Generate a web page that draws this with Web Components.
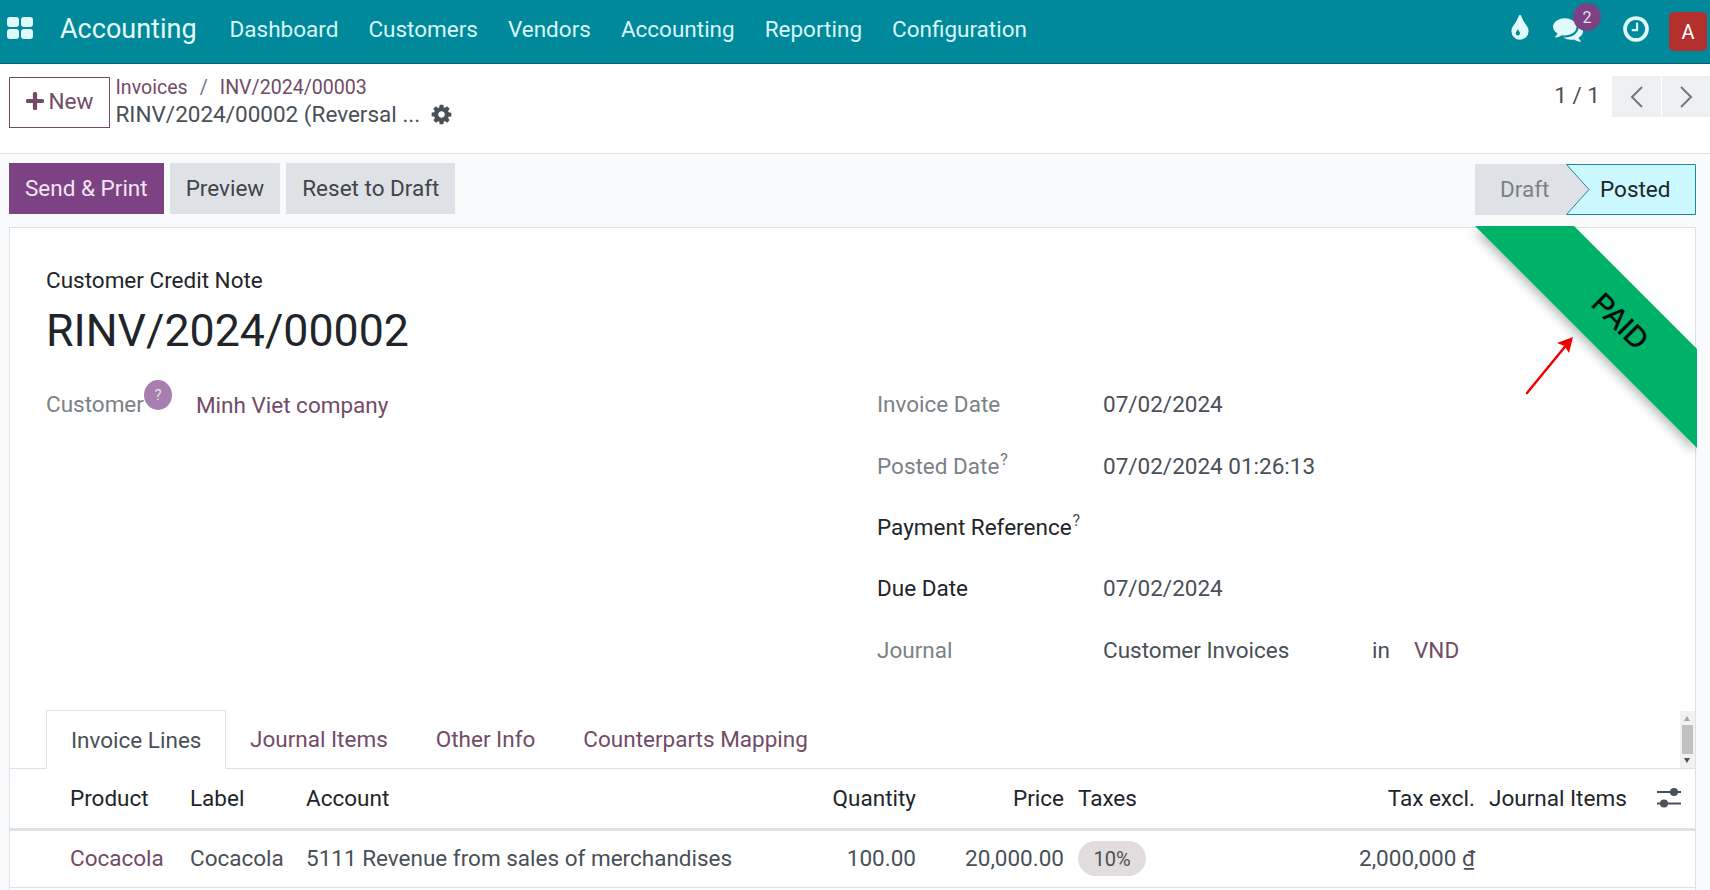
<!DOCTYPE html>
<html lang="en"><head><meta charset="utf-8"><title>Accounting</title>
<style>
html,body{margin:0;padding:0;height:890px;overflow:hidden;background:#f9fafb;}
body{font-family:Roboto,"Liberation Sans",sans-serif;font-size:22.5px;color:#495057;}
</style></head><body>
<o-navbar></o-navbar>
<o-control-panel></o-control-panel>
<o-status-row></o-status-row>
<o-sheet></o-sheet>
<script>
const COG="M1152 896q0-106-75-181t-181-75-181 75-75 181 75 181 181 75 181-75 75-181zm512-109v222q0 12-8 23t-20 13l-185 28q-19 54-39 91 35 50 107 138 10 12 10 25t-9 23q-27 37-99 108t-94 71q-12 0-26-9l-138-108q-44 23-91 38-16 136-29 186-7 28-36 28h-222q-14 0-24.500-8.500t-11.500-21.500l-28-184q-49-16-90-37l-141 107q-10 9-25 9-14 0-25-11-126-114-165-168-7-10-7-23 0-12 8-23 15-21 51-66.500t54-70.500q-27-50-41-99l-183-27q-13-2-21-12.500t-8-23.500v-222q0-12 8-23t19-13l186-28q14-46 39-92-40-57-107-138-10-12-10-24 0-10 9-23 26-36 98.500-107.500t94.500-71.500q13 0 26 10l138 107q44-23 91-38 16-136 29-186 7-28 36-28h222q14 0 24.500 8.500t11.500 21.500l28 184q49 16 90 37l142-107q9-9 24-9 13 0 25 10 129 119 165 170 7 8 7 22 0 12-8 23-15 21-51 66.500t-54 70.500q26 50 41 98l183 28q13 2 21 12.500t8 23.500z";
const TINT="M896 1152q0-36-20-69-1-1-15.500-22.500t-25.500-38-25-44-21-50.500q-4-16-21-16t-21 16q-7 23-21 50.500t-25 44-25.500 38-15.500 22.500q-20 33-20 69 0 53 37.500 90.500t90.500 37.500 90.500-37.500 37.500-90.500zm512-128q0 212-150 362t-362 150-362-150-150-362q0-145 81-275 6-9 62.500-90.500t101-151 99.500-178 83-201.500q9-30 34-47t51-17 51.500 17 33.500 47q28 93 83 201.500t99.500 178 101 151 62.500 90.500q81 127 81 275z";
const COMMENTS="M1408 768q0 139-94 257t-256.500 186.500-353.500 68.500q-86 0-176-16-124 88-278 128-36 9-86 16h-3q-11 0-20.500-8t-11.500-21q-1-3-1-6.500t.5-6.500 2-6l2.500-5 3.500-5.500 4-5 4.500-5 4-4.500q5-6 23-25t26-29.500 22.500-29 25-38.500 20.500-44q-124-72-195-177t-71-224q0-139 94-257t256.500-186.500 353.500-68.500 353.500 68.500 256.500 186.500 94 257zm384 256q0 120-71 224.500t-195 176.500q10 24 20.500 44t25 38.500 22.500 29 26 29.500 23 25q1 1 4 4.500t4.500 5 4 5 3.500 5.500l2.500 5 2 6 .5 6.500-1 6.500q-3 14-13 22t-22 7q-50-7-86-16-154-40-278-128-90 16-176 16-271 0-472-132 58 4 88 4 161 0 309-45t264-129q125-92 192-212t67-254q0-77-23-152 129 71 204 178t75 230z";
const CLOCK="M1024 544v448q0 14-9 23t-23 9h-320q-14 0-23-9t-9-23v-64q0-14 9-23t23-9h224v-352q0-14 9-23t23-9h64q14 0 23 9t9 23zm416 352q0-148-73-273t-198-198-273-73-273 73-198 198-73 273 73 273 198 198 273 73 273-73 198-198 73-273zm224 0q0 209-103 385.500t-279.500 279.500-385.500 103-385.500-103-279.500-279.500-103-385.500 103-385.500 279.500-279.500 385.500-103 385.500 103 279.500 279.500 103 385.500z";
function def(name,html){customElements.define(name,class extends HTMLElement{constructor(){super();this.attachShadow({mode:"open"}).innerHTML=html(this);}});}

def("o-navbar",()=>`<style>
:host{display:flex;align-items:center;background:#00899b;border-bottom:1px solid #04606c;color:#d9f6f8;box-sizing:border-box;height:64px;padding:0 0 6px 6px;}
.apps{display:block;width:26px;height:22px;margin:-2px 0 0 1px;}
.brand{font-size:27px;margin-left:27px;margin-right:33px;color:#e6f9fb;}
.menu{display:flex;gap:30px;}
.right{margin-left:auto;display:flex;align-items:center;position:relative;padding-top:1px;}
svg{display:block;fill:#e0f9fb;}
.drop{margin-right:18px;}
.chat{position:relative;margin-right:38px;}
.badge{position:absolute;left:20px;top:-11px;width:28px;height:28px;border-radius:50%;background:#7c4283;color:#e9dcec;font-size:16px;display:flex;align-items:center;justify-content:center;}
.av{width:38px;height:39px;border-radius:5px;background:#b3302e;color:#fff;font-size:20px;display:flex;align-items:center;justify-content:center;margin:5px 3px 0 18px;}
</style>
<svg class="apps" viewBox="0 0 26 22"><rect x="0" y="0" width="12" height="10" rx="3"/><rect x="14" y="0" width="12" height="10" rx="3"/><rect x="0" y="12" width="12" height="10" rx="3"/><rect x="14" y="12" width="12" height="10" rx="3"/></svg>
<span class="brand">Accounting</span>
<div class="menu"><span>Dashboard</span><span>Customers</span><span>Vendors</span><span>Accounting</span><span>Reporting</span><span>Configuration</span></div>
<div class="right">
<svg class="drop" width="30" height="30" viewBox="0 0 1792 1792"><path fill-rule="evenodd" d="${TINT}"/></svg>
<div class="chat"><svg width="30" height="30" viewBox="0 0 1792 1792"><path d="${COMMENTS}"/></svg><span class="badge">2</span></div>
<svg width="30" height="30" viewBox="0 0 1792 1792"><path d="${CLOCK}"/></svg>
<div class="av">A</div>
</div>`);

def("o-control-panel",()=>`<style>
:host{display:flex;background:#fff;border-bottom:1px solid #dee2e6;padding:13px 0 0 9px;box-sizing:border-box;height:90px;}
.new{box-sizing:border-box;width:101px;height:51px;padding-bottom:3px;border:1px solid #714b67;color:#714b67;display:flex;align-items:center;justify-content:center;gap:5px;}
.crumbs{margin-left:5.500px;line-height:27px;margin-top:-3px;}
.l{color:#714b67;font-size:19.6px;white-space:nowrap;}
.l i{font-style:normal;color:#6c757d;margin:0 12px;}
.cur{display:flex;align-items:center;white-space:nowrap;color:#495057;}
.cur svg{margin-left:10px;fill:#495057;}
.pager{margin-left:auto;margin-top:-1px;display:flex;align-items:flex-start;}
.num{margin:6px 11px 0 0;color:#495057;}
.btn{width:49px;height:41px;background:#eef0f2;display:flex;align-items:center;justify-content:center;margin-left:1px;}
.btn svg{fill:none;stroke:#777;stroke-width:2;}
</style>
<div class="new"><svg width="18" height="18" viewBox="0 0 17 17" fill="#714b67"><path d="M6.500 1.500q0-1.500 1.500-1.500h1q1.500 0 1.500 1.500v5h5q1.500 0 1.500 1.500v1q0 1.500-1.500 1.500h-5v5q0 1.500-1.500 1.500h-1q-1.500 0-1.500-1.500v-5h-5q-1.500 0-1.500-1.500v-1q0-1.500 1.500-1.500h5z"/></svg><span>New</span></div>
<div class="crumbs"><div class="l"><span>Invoices</span><i>/</i><span>INV/2024/00003</span></div>
<div class="cur"><span>RINV/2024/00002 (Reversal ...</span><svg width="23" height="23" viewBox="0 0 1792 1792"><path d="${COG}"/></svg></div></div>
<div class="pager"><span class="num">1 / 1</span>
<div class="btn"><svg width="16" height="24" viewBox="0 0 16 24"><path d="M13 2 3 12l10 10"/></svg></div>
<div class="btn" style="width:48px"><svg width="16" height="24" viewBox="0 0 16 24"><path d="M3 2l10 10L3 22"/></svg></div></div>`);

def("o-status-row",()=>`<style>
:host{display:flex;padding:9px 14px 0 9px;box-sizing:border-box;height:73px;gap:6px;}
.b{height:51px;display:flex;align-items:center;padding:0 16px 2px;background:#dee2e6;color:#3f454b;box-sizing:border-box;}
.p{background:#7c4283;color:#f2e6f3;}
.st{margin-left:auto;margin-top:1px;display:flex;height:51px;position:relative;}
.d{width:114px;background:#dee2e6;color:#7b8186;display:flex;align-items:center;padding:0 0 2px 25px;box-sizing:border-box;}
.o{width:130px;margin-left:-23px;position:relative;color:#212529;display:flex;align-items:center;padding:0 0 2px 34px;box-sizing:border-box;}
.o svg{position:absolute;inset:0;width:100%;height:100%;}
.o span{position:relative;}
</style>
<div class="b p">Send &amp; Print</div><div class="b">Preview</div><div class="b">Reset to Draft</div>
<div class="st"><div class="d">Draft</div><div class="o"><svg viewBox="0 0 130 51" preserveAspectRatio="none"><path d="M.5.500H129.500V50.500H.5L23 25.500Z" fill="#ccf9ff" stroke="#1e8a97"/></svg><span>Posted</span></div></div>`);

def("o-ribbon",()=>`<style>
:host{display:block;position:absolute;left:1455px;top:-2px;width:232px;height:232px;overflow:hidden;pointer-events:none;}
svg{position:absolute;left:0;top:0;}
.t{position:absolute;left:95px;top:79px;width:120px;text-align:center;transform:rotate(45deg);font:29px "Liberation Sans",sans-serif;color:#0a0a0a;-webkit-text-stroke:.5px #0a0a0a;}
</style>
<svg width="232" height="232" viewBox="0 0 232 232"><defs><filter id="s" x="-20%" y="-20%" width="140%" height="140%"><feDropShadow dx="-2" dy="5" stdDeviation="5" flood-color="#000" flood-opacity=".25"/></filter></defs><path d="M10 0H109L232 123V222Z" fill="#04b167" filter="url(#s)"/></svg><div class="t">PAID</div>`);

def("o-arrow",()=>`<style>:host{display:block;position:absolute;left:1515px;top:104px;width:50px;height:65px;}svg{display:block;}</style>
<svg width="50" height="65" viewBox="0 0 50 65"><path d="M2 61 43 11" stroke="#f00000" stroke-width="2.500" stroke-linecap="round" fill="none"/><path d="M48 5 44 21 39.500 14 32 11Z" fill="#f00000"/></svg>`);

def("o-field",(el)=>`<style>
:host{display:grid;grid-template-columns:226px auto 1fr;height:61.400px;align-items:center;color:#495057;white-space:nowrap;}
.k{color:${el.hasAttribute("strong")?"#212529":"#7b8186"};}
sup{font-size:16px;color:${el.hasAttribute("strong")?"#495057":"#6c757d"};margin-left:1px;vertical-align:9px;line-height:0;}
</style><div class="k">${el.getAttribute("label")}${el.hasAttribute("help")?"<sup>?</sup>":""}</div><div><slot></slot></div>`);

def("o-tabs",()=>`<style>
:host{display:flex;position:relative;height:59px;border-bottom:1px solid #dee2e6;box-sizing:border-box;padding-left:36px;margin-top:30px;}
.t{color:#714b67;height:58px;display:flex;align-items:center;white-space:nowrap;}
.a{box-sizing:border-box;width:180px;height:59px;border:1px solid #dee2e6;border-bottom:1px solid #fff;padding-left:24px;color:#495057;background:#fff;margin-right:24px;}
.sb{position:absolute;right:0;top:1px;width:15px;height:57px;background:#f1f1f1;}
.th{position:absolute;left:2px;right:2px;top:14px;height:29px;background:#c1c1c1;}
.u,.dn{position:absolute;left:4px;width:0;height:0;border-left:3.500px solid transparent;border-right:3.500px solid transparent;}
.u{top:5px;border-bottom:5px solid #a3a3a3;}.dn{bottom:5px;border-top:5px solid #505050;}
</style>
<div class="t a">Invoice Lines</div><div class="t" style="margin-right:48px">Journal Items</div><div class="t" style="margin-right:48px">Other Info</div><div class="t">Counterparts Mapping</div>
<div class="sb"><div class="u"></div><div class="th"></div><div class="dn"></div></div>`);

def("o-lines",()=>`<style>
:host{display:block;}
table{width:100%;border-collapse:separate;border-spacing:0;table-layout:fixed;}
th,td{font-weight:400;text-align:left;padding:0;white-space:nowrap;overflow:visible;}
th{height:58px;padding-bottom:1px;border-bottom:3px solid #dee2e6;color:#212529;}
td{height:53px;padding-bottom:3px;border-bottom:1px solid #dee2e6;color:#495057;}
.e{text-align:right;}
a{color:#714b67;}
.tag{display:inline-flex;align-items:center;justify-content:center;width:68px;height:35px;border-radius:18px;background:#e3dcdc;font-size:20px;color:#495057;margin-top:2px;vertical-align:middle;}
.u{text-decoration:underline;}
svg{display:block;}
</style>
<table><colgroup><col style="width:60px"><col style="width:120px"><col style="width:116px"><col style="width:454px"><col style="width:156px"><col style="width:148px"><col style="width:14px"><col style="width:201px"><col style="width:196px"><col style="width:14px"><col style="width:168px"><col></colgroup>
<thead><tr><th></th><th>Product</th><th>Label</th><th>Account</th><th class="e">Quantity</th><th class="e">Price</th><th></th><th>Taxes</th><th class="e">Tax excl.</th><th></th><th>Journal Items</th><th><svg width="24" height="22" viewBox="0 0 24 22" fill="#495057"><rect y="4" width="24" height="2"/><rect y="15.500" width="24" height="2"/><circle cx="17" cy="5" r="4"/><circle cx="7" cy="16.500" r="4"/></svg></th></tr></thead>
<tbody><tr><td></td><td><a>Cocacola</a></td><td>Cocacola</td><td>5111 Revenue from sales of merchandises</td><td class="e">100.00</td><td class="e">20,000.00</td><td></td><td><span class="tag">10%</span></td><td class="e">2,000,000 <span class="u">₫</span></td><td></td><td></td><td></td></tr></tbody></table>`);

def("o-sheet",()=>`<style>
:host{display:block;position:relative;margin:0 14px 0 9px;height:700px;background:#fff;border:1px solid #dee2e6;border-bottom:0;box-sizing:border-box;}
.head{padding:37px 36px 0;}
.lbl{line-height:30px;color:#212529;}
h1{margin:8px 0 0;font-weight:400;font-size:44.700px;line-height:56px;color:#212529;height:70.500px;}
.cols{display:grid;grid-template-columns:831px 1fr;padding-left:36px;}
.cust{display:flex;height:61px;align-items:center;white-space:nowrap;}
.cust .k{color:#7b8186;}
.q{width:28px;height:30px;border-radius:50%;background:#a67fae;color:#eadfec;font-size:15px;display:flex;align-items:center;justify-content:center;margin:-19px 0 0 0;}
.cust a{color:#714b67;margin:2px 0 0 24px;}
.a{color:#714b67;}
.jr{display:inline-grid;grid-template-columns:269px 42px auto;}
</style>
<o-ribbon></o-ribbon><o-arrow></o-arrow>
<div class="head"><div class="lbl">Customer Credit Note</div><h1>RINV/2024/00002</h1></div>
<div class="cols"><div><div class="cust"><span class="k">Customer</span><span class="q">?</span><a>Minh Viet company</a></div></div>
<div>
<o-field label="Invoice Date">07/02/2024</o-field>
<o-field label="Posted Date" help>07/02/2024 01:26:13</o-field>
<o-field label="Payment Reference" help strong></o-field>
<o-field label="Due Date" strong>07/02/2024</o-field>
<o-field label="Journal"><span class="jr"><span>Customer Invoices</span><span>in</span><span class="a">VND</span></span></o-field>
</div></div>
<o-tabs></o-tabs>
<o-lines></o-lines>`);
</script>
</body></html>
